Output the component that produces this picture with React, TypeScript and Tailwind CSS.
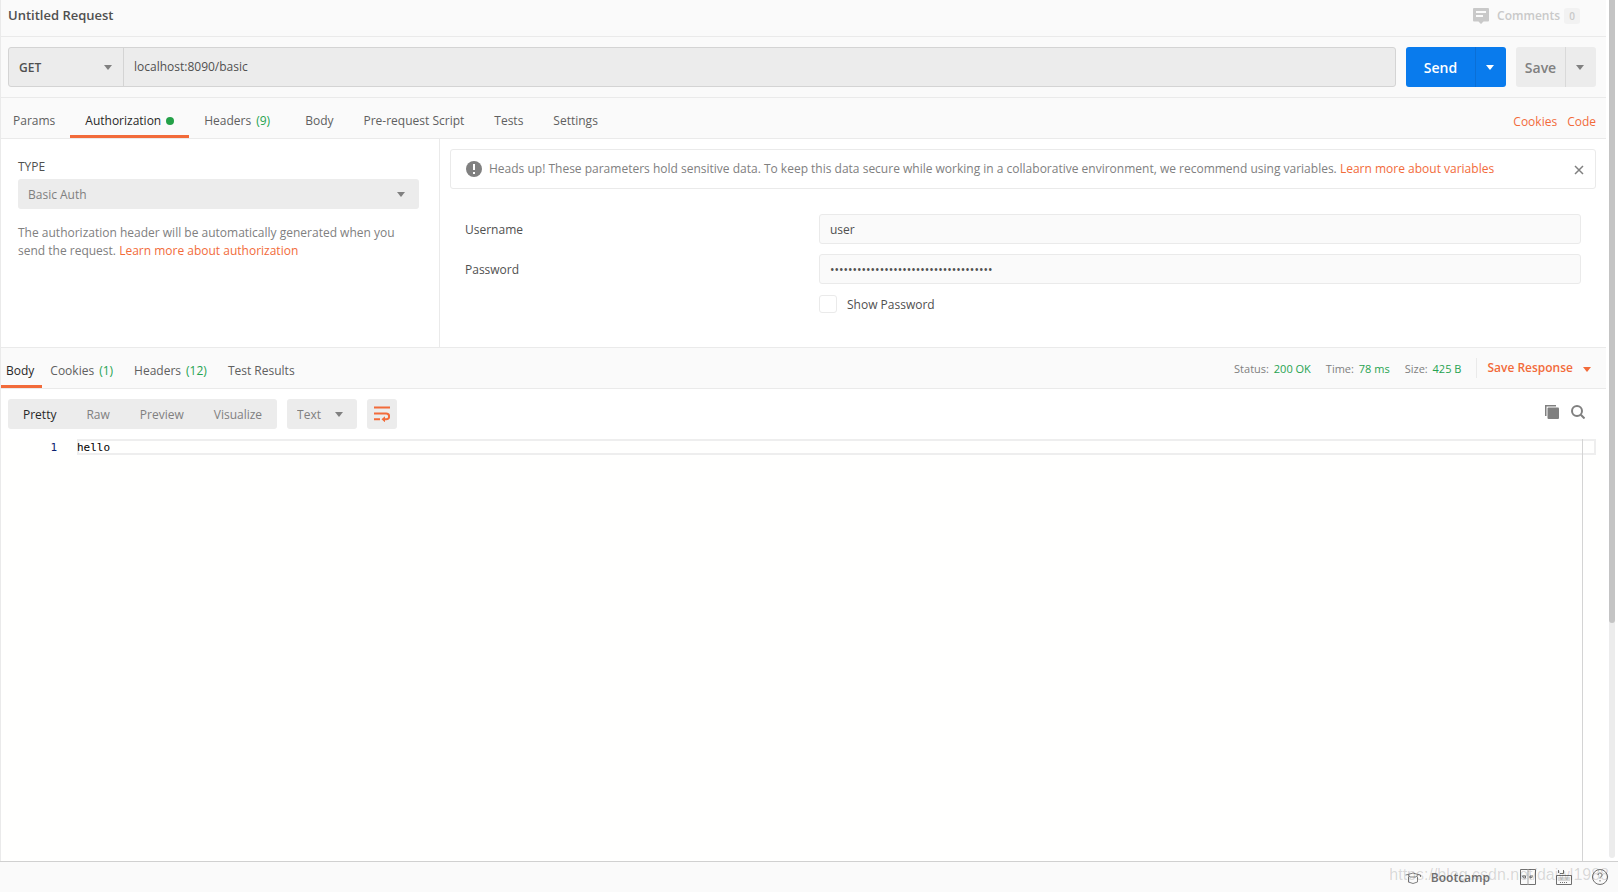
import { useState } from 'react';
import type { ReactNode } from 'react';

const requestTabs = [
  { label: 'Params' },
  { label: 'Authorization', dot: true },
  { label: 'Headers', count: 9 },
  { label: 'Body' },
  { label: 'Pre-request Script' },
  { label: 'Tests' },
  { label: 'Settings' },
];

const responseTabs = [
  { label: 'Body' },
  { label: 'Cookies', count: 1 },
  { label: 'Headers', count: 12 },
  { label: 'Test Results' },
];

const viewModes = ['Pretty', 'Raw', 'Preview', 'Visualize'];

function Caret({ className = '' }: { className?: string }) {
  return (
    <svg className={`h-[5px] w-2 shrink-0 ${className}`} viewBox="0 0 8 5" fill="currentColor" aria-hidden="true">
      <path d="M0 0h8L4 5z" />
    </svg>
  );
}

function CommentIcon() {
  return (
    <svg className="h-4 w-4" viewBox="0 0 16 16" aria-hidden="true">
      <path d="M1 0h14a1 1 0 0 1 1 1v11.500a1 1 0 0 1-1 1h-4.500L8 16l-2.500-2.500H1a1 1 0 0 1-1-1V1a1 1 0 0 1 1-1z" fill="#c9c9c9" />
      <path d="M3 4h10M3 8h7" stroke="#fafafa" strokeWidth="2" />
    </svg>
  );
}

function WrapIcon() {
  return (
    <svg className="h-4 w-4" viewBox="0 0 16 16" fill="none" stroke="#f26b3a" strokeWidth="2" aria-hidden="true">
      <path d="M0 1.500h16M0 7.500h12.200a2.900 2.900 0 0 1 0 5.800H10M0 13.300h6" />
      <path d="M11 10.300v6L7.500 13.300z" fill="#f26b3a" stroke="none" />
    </svg>
  );
}

function CopyIcon() {
  return (
    <svg className="h-[14px] w-[14px]" viewBox="0 0 14 14" aria-hidden="true">
      <path d="M0 0h11v1.500H1.500V11H0z" fill="#808080" />
      <rect x="2.500" y="2.500" width="11.500" height="11.500" rx="1" fill="#808080" />
    </svg>
  );
}

function SearchIcon() {
  return (
    <svg className="h-[14px] w-[14px]" viewBox="0 0 14 14" fill="none" stroke="#808080" strokeWidth="2" aria-hidden="true">
      <circle cx="6" cy="6" r="5" />
      <path d="M9.800 9.800 13.500 13.500" />
    </svg>
  );
}

function Count({ children }: { children: ReactNode }) {
  return <span className="ml-[5px] text-[#26a350]">({children})</span>;
}

function RequestBar() {
  const [method, setMethod] = useState('GET');
  const [url, setUrl] = useState('localhost:8090/basic');

  return (
    <div className="flex gap-[10px] border-b border-[#eaeaea] py-[10px] pr-[10px] pl-[7px]">
      <div className="flex h-10 flex-1 rounded-[3px] border border-[#d4d4d4] bg-[#ececec]">
        <div className="relative w-[115px] border-r border-[#d4d4d4]">
          <select
            aria-label="Method"
            className="h-full w-full appearance-none px-[10px] pt-0.5 font-semibold text-[#505050] outline-none"
            value={method}
            onChange={(e) => setMethod(e.currentTarget.value)}
          >
            <option>GET</option>
            <option>POST</option>
            <option>PUT</option>
            <option>DELETE</option>
          </select>
          <Caret className="pointer-events-none absolute top-[17px] right-[11px] text-[#808080]" />
        </div>
        <input
          aria-label="Request URL"
          className="min-w-0 flex-1 px-[10px] text-[#505050] outline-none"
          value={url}
          onChange={(e) => setUrl(e.currentTarget.value)}
        />
      </div>
      <div className="flex h-10 overflow-hidden rounded-[3px] bg-[#097bed] text-white">
        <button className="w-[69px] text-[14px] font-semibold">Send</button>
        <button aria-label="Send options" className="flex w-[31px] items-center justify-center border-l border-[#0a6fd6] pr-0.5">
          <Caret />
        </button>
      </div>
      <div className="flex h-10 overflow-hidden rounded-[3px] bg-[#ececec] text-[#808080]">
        <button className="w-[49px] text-[14px] font-semibold">Save</button>
        <button aria-label="Save options" className="flex w-[31px] items-center justify-center border-l border-[#d9d9d9] pr-0.5">
          <Caret />
        </button>
      </div>
    </div>
  );
}

function RequestTabs() {
  const [active, setActive] = useState('Authorization');

  return (
    <div className="flex h-[41px] items-stretch justify-between border-b border-[#eaeaea] pr-[10px]">
      <nav className="flex">
        {requestTabs.map((tab) => (
          <button
            key={tab.label}
            className={`flex items-center border-b-[3px] px-[15px] pt-[8px] first:pl-3 ${
              active === tab.label ? 'border-[#f26b3a] text-[#282828]' : 'border-transparent text-[#606060]'
            } ${tab.count ? 'mr-[5px]' : ''}`}
            onClick={() => setActive(tab.label)}
          >
            {tab.label}
            {tab.dot ? <span className="ml-[5px] h-2 w-2 rounded-full bg-[#24a148]" /> : null}
            {tab.count ? <Count>{tab.count}</Count> : null}
          </button>
        ))}
      </nav>
      <div className="flex items-center gap-[10px] pt-2 text-[#f26b3a]">
        <a href="#cookies">Cookies</a>
        <a href="#code">Code</a>
      </div>
    </div>
  );
}

function AuthType() {
  const [type, setType] = useState('Basic Auth');

  return (
    <div className="w-[439px] shrink-0 border-r border-[#eaeaea] pt-[19px] pr-5 pl-[17px]">
      <label htmlFor="auth-type" className="block leading-[18px] text-[#505050]">
        TYPE
      </label>
      <div className="relative mt-[3px] mb-[15px]">
        <select
          id="auth-type"
          className="block h-[30px] w-full appearance-none rounded-[3px] bg-[#ececec] px-[10px] pt-0.5 text-[#808080] outline-none"
          value={type}
          onChange={(e) => setType(e.currentTarget.value)}
        >
          <option>No Auth</option>
          <option>Basic Auth</option>
          <option>Bearer Token</option>
        </select>
        <Caret className="pointer-events-none absolute top-[13px] right-[14px] text-[#808080]" />
      </div>
      <p className="leading-[18px] text-[#808080]">
        The authorization header will be automatically generated when you send the request.{' '}
        <a href="#authorization" className="text-[#f26b3a]">
          Learn more about authorization
        </a>
      </p>
    </div>
  );
}

function AuthForm() {
  const [username, setUsername] = useState('user');
  const [password, setPassword] = useState('0123456789abcdef0123456789abcdef0123');
  const [showPassword, setShowPassword] = useState(false);
  const [showAlert, setShowAlert] = useState(true);

  return (
    <div className="min-w-0 flex-1 p-[10px]">
      {showAlert ? (
        <div className="flex h-10 items-center rounded-[3px] border border-[#eaeaea] pr-[11px] pl-[15px]">
          <svg className="mr-[7px] h-4 w-4 shrink-0" viewBox="0 0 16 16" aria-hidden="true">
            <circle cx="8" cy="8" r="8" fill="#808080" />
            <path d="M8 3v6M8 11v2" stroke="#fff" strokeWidth="2" />
          </svg>
          <p className="flex-1 text-[#808080]">
            Heads up! These parameters hold sensitive data. To keep this data secure while working in a collaborative
            environment, we recommend using variables.{' '}
            <a href="#variables" className="text-[#f26b3a]">
              Learn more about variables
            </a>
          </p>
          <button aria-label="Dismiss" onClick={() => setShowAlert(false)}>
            <svg className="mt-0.5 h-[10px] w-[10px]" viewBox="0 0 10 10" fill="none" stroke="#808080" strokeWidth="1.500">
              <path d="M1 1l8 8M9 1l-8 8" />
            </svg>
          </button>
        </div>
      ) : null}
      <div className="mt-[25px] grid grid-cols-[354fr_762fr] items-center gap-y-[10px] px-[15px] text-[#505050]">
        <label htmlFor="username" className="pt-0.5">
          Username
        </label>
        <input
          id="username"
          className="h-[30px] rounded-[3px] border border-[#eaeaea] bg-[#fafafa] px-[10px] outline-none"
          value={username}
          onChange={(e) => setUsername(e.currentTarget.value)}
        />
        <label htmlFor="password" className="pt-0.5">
          Password
        </label>
        <input
          id="password"
          type={showPassword ? 'text' : 'password'}
          className="h-[30px] rounded-[3px] border border-[#eaeaea] bg-[#fafafa] px-[10px] outline-none"
          value={password}
          onChange={(e) => setPassword(e.currentTarget.value)}
        />
        <label className="col-start-2 flex items-center gap-[10px]">
          <input
            type="checkbox"
            className="h-[18px] w-[18px] appearance-none rounded-[3px] border border-[#eaeaea] bg-white checked:bg-[#f26b3a]"
            checked={showPassword}
            onChange={(e) => setShowPassword(e.currentTarget.checked)}
          />
          <span className="pt-0.5">Show Password</span>
        </label>
      </div>
    </div>
  );
}

function ResponseTabs() {
  const [active, setActive] = useState('Body');

  return (
    <div className="flex h-[41px] justify-between border-b border-[#eaeaea] bg-[#fafafa] pr-[15px]">
      <nav className="flex">
        {responseTabs.map((tab) => (
          <button
            key={tab.label}
            className={`flex items-center border-b-[3px] pt-[8px] first:pr-[8px] first:pl-[5px] not-first:mr-[5px] not-first:px-2 ${
              active === tab.label ? 'border-[#f26b3a] text-[#282828]' : 'border-transparent text-[#606060]'
            }`}
            onClick={() => setActive(tab.label)}
          >
            {tab.label}
            {tab.count ? <Count>{tab.count}</Count> : null}
          </button>
        ))}
      </nav>
      <div className="flex items-center text-[11px] text-[#808080]">
        <div className="flex gap-[15px] pt-0.5">
          <span>
            Status: <span className="ml-[2px] text-[#26a350]">200 OK</span>
          </span>
          <span>
            Time: <span className="ml-[2px] text-[#26a350]">78 ms</span>
          </span>
          <span>
            Size: <span className="ml-[2px] text-[#26a350]">425 B</span>
          </span>
        </div>
        <button className="ml-[15px] flex h-5 items-center gap-[10px] border-l border-[#eaeaea] pl-[10px] text-[12px] font-semibold text-[#f26b3a]">
          Save Response
          <Caret className="mt-0.5" />
        </button>
      </div>
    </div>
  );
}

function ResponseToolbar() {
  const [mode, setMode] = useState('Pretty');

  return (
    <div className="flex items-start py-[10px] pr-5 pl-[7px]">
      <div className="flex h-[30px] rounded-[3px] bg-[#ececec]">
        {viewModes.map((m) => (
          <button
            key={m}
            className={`px-[15px] pt-0.5 ${mode === m ? 'text-[#282828]' : 'text-[#808080]'}`}
            onClick={() => setMode(m)}
          >
            {m}
          </button>
        ))}
      </div>
      <div className="relative ml-[10px]">
        <select
          aria-label="Response format"
          defaultValue="Text"
          className="block h-[30px] w-[70px] appearance-none rounded-[3px] bg-[#ececec] px-[10px] pt-0.5 text-[#808080] outline-none"
        >
          <option>Text</option>
          <option>JSON</option>
        </select>
        <Caret className="pointer-events-none absolute top-[13px] right-[14px] text-[#808080]" />
      </div>
      <button aria-label="Wrap lines" className="ml-[10px] flex h-[30px] w-[30px] items-center justify-center rounded-[3px] bg-[#ececec]">
        <WrapIcon />
      </button>
      <div className="ml-auto flex gap-3 pt-[6px] pr-px">
        <button aria-label="Copy">
          <CopyIcon />
        </button>
        <button aria-label="Search">
          <SearchIcon />
        </button>
      </div>
    </div>
  );
}

function StatusBar() {
  return (
    <footer className="relative flex h-[31px] items-center justify-end border-t border-[#d0d0d0] bg-[#fafafa] pr-[10px] text-[#707070]">
      <button className="flex items-center gap-[10px] pt-0.5 font-semibold">
        <svg className="h-4 w-4" viewBox="0 0 16 16" fill="none" stroke="#808080" aria-hidden="true">
          <path d="M.5 5 3 4.500M13 4.500l2.500.500v2M3 4.500 8 3l5 1.500L11 7H5zM3.500 6.500v5.500q4.500 3 9 0V6.500" />
        </svg>
        Bootcamp
      </button>
      <button aria-label="Two pane view" className="ml-[30px]">
        <svg className="h-4 w-4" viewBox="0 0 16 16" fill="none" stroke="#707070" aria-hidden="true">
          <path d="M.5.5h15v15H.5z" />
          <path d="M8 0v16" stroke="#a0a0a0" />
          <path d="M2.500 7h3v2h-2zM10 9V7h3M10 9l2.500-1" />
        </svg>
      </button>
      <button aria-label="Keyboard shortcuts" className="ml-5">
        <svg className="h-4 w-4" viewBox="0 0 16 16" fill="none" stroke="#707070" aria-hidden="true">
          <path d="M.5 6.500h15v9H.5zM2.500 1v3M4 4.500h3.500V1" />
          <path d="M2.500 9h11M2.500 11h11M4 13.500h8" strokeDasharray="1 1" />
        </svg>
      </button>
      <button aria-label="Help" className="ml-5">
        <svg className="h-4 w-4" viewBox="0 0 16 16" fill="none" stroke="#707070" aria-hidden="true">
          <circle cx="8" cy="8" r="7.500" />
          <path d="M6 6a2 2 0 1 1 3 1.700Q8 8.300 8 9.500M8 11v1.500" />
        </svg>
      </button>
      <span className="pointer-events-none absolute right-[9px] bottom-[9px] font-['Liberation_Sans',sans-serif] text-[16px] leading-4 text-black/15">
        https://blog.csdn.net/daiwl1988
      </span>
    </footer>
  );
}

export default function App() {
  return (
    <div className="flex min-h-screen flex-col bg-white font-['Open_Sans',sans-serif] text-[12px]">
      <div className="flex flex-1">
        <main className="flex min-w-0 flex-1 flex-col border-l border-[#eaeaea]">
          <div className="bg-[#fafafa]">
            <header className="flex h-[37px] items-center justify-between border-b border-[#eaeaea] pr-[26px] pb-[4px] pl-[7px]">
              <h1 className="text-[13px] font-semibold text-[#505050]">Untitled Request</h1>
              <button className="flex items-center font-semibold text-[#c9c9c9]">
                <CommentIcon />
                <span className="ml-2">Comments</span>
                <span className="ml-1 flex h-4 w-4 items-center justify-center rounded-[3px] bg-[#f2f2f2] text-[10px]">0</span>
              </button>
            </header>
            <RequestBar />
            <RequestTabs />
          </div>
          <section className="flex min-h-[209px] border-b border-[#eaeaea]">
            <AuthType />
            <AuthForm />
          </section>
          <ResponseTabs />
          <ResponseToolbar />
          <div className="relative flex flex-1 items-start bg-[#fffffe] pr-[10px] font-['DejaVu_Sans_Mono',monospace] text-[11px]">
            <span className="w-[56px] text-right leading-[18px] text-[#0b216f]">1</span>
            <code className="ml-5 h-4 flex-1 leading-[18px] font-['DejaVu_Sans_Mono',monospace] text-black ring-2 ring-[#eeeeee] ring-inset">
              hello
            </code>
            <div className="absolute inset-y-0 right-[23px] border-l border-[#d4d4d4]" />
          </div>
        </main>
        <div className="flex w-3 shrink-0 flex-col px-[3px] pb-[3px]">
          <div className="flex-1 rounded-b-[3px] bg-[#ececec]">
            <div className="h-[623px] rounded-b-[3px] bg-[#c4c4c4]" />
          </div>
        </div>
      </div>
      <StatusBar />
    </div>
  );
}
